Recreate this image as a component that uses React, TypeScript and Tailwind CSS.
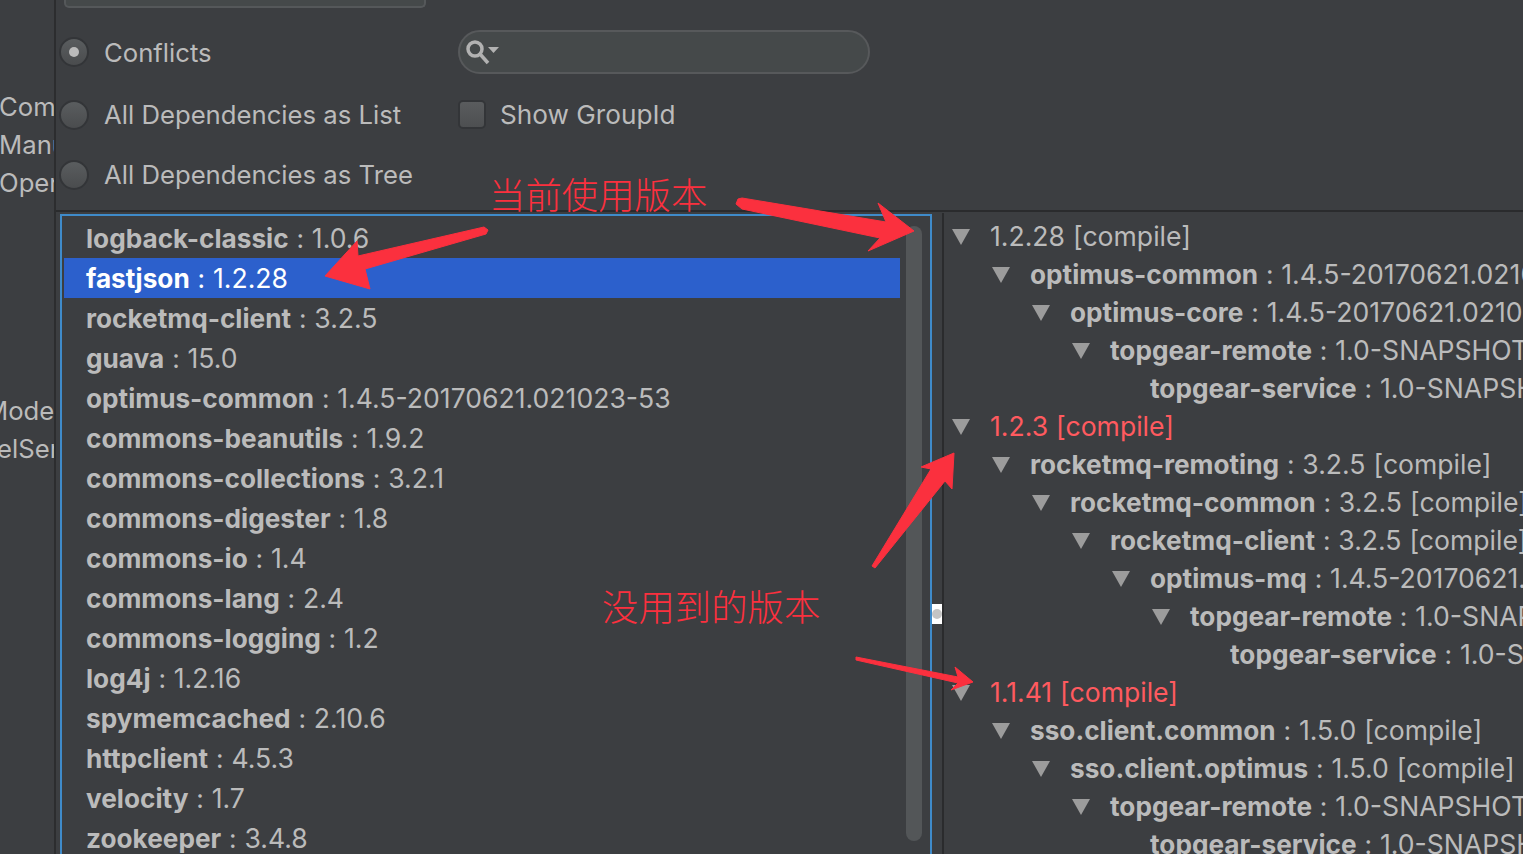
import React from 'react';

const FONT = "font-['Inter','Noto_Sans_CJK_SC',sans-serif]";

const deps: [string, string][] = [
  ['logback-classic', '1.0.6'],
  ['fastjson', '1.2.28'],
  ['rocketmq-client', '3.2.5'],
  ['guava', '15.0'],
  ['optimus-common', '1.4.5-20170621.021023-53'],
  ['commons-beanutils', '1.9.2'],
  ['commons-collections', '3.2.1'],
  ['commons-digester', '1.8'],
  ['commons-io', '1.4'],
  ['commons-lang', '2.4'],
  ['commons-logging', '1.2'],
  ['log4j', '1.2.16'],
  ['spymemcached', '2.10.6'],
  ['httpclient', '4.5.3'],
  ['velocity', '1.7'],
  ['zookeeper', '3.4.8'],
];

type TreeRow = { level: number; name?: string; ver: string; leaf?: boolean; red?: boolean };

const tree: TreeRow[] = [
  { level: 0, ver: '1.2.28 [compile]' },
  { level: 1, name: 'optimus-common', ver: '1.4.5-20170621.021023-53' },
  { level: 2, name: 'optimus-core', ver: '1.4.5-20170621.021023-53' },
  { level: 3, name: 'topgear-remote', ver: '1.0-SNAPSHOT [compile]' },
  { level: 4, name: 'topgear-service', ver: '1.0-SNAPSHOT [compile]', leaf: true },
  { level: 0, ver: '1.2.3 [compile]', red: true },
  { level: 1, name: 'rocketmq-remoting', ver: '3.2.5 [compile]' },
  { level: 2, name: 'rocketmq-common', ver: '3.2.5 [compile]' },
  { level: 3, name: 'rocketmq-client', ver: '3.2.5 [compile]' },
  { level: 4, name: 'optimus-mq', ver: '1.4.5-20170621.021023-53' },
  { level: 5, name: 'topgear-remote', ver: '1.0-SNAPSHOT [compile]' },
  { level: 6, name: 'topgear-service', ver: '1.0-SNAPSHOT [compile]', leaf: true },
  { level: 0, ver: '1.1.41 [compile]', red: true },
  { level: 1, name: 'sso.client.common', ver: '1.5.0 [compile]' },
  { level: 2, name: 'sso.client.optimus', ver: '1.5.0 [compile]' },
  { level: 3, name: 'topgear-remote', ver: '1.0-SNAPSHOT [compile]' },
  { level: 4, name: 'topgear-service', ver: '1.0-SNAPSHOT [compile]', leaf: true },
];

const Radio = ({ checked }: { checked?: boolean }) => (
  <span className="flex h-[30px] w-[30px] shrink-0 items-center justify-center rounded-full border-2 border-[#333538] bg-gradient-to-b from-[#5a5d5f] to-[#4a4c4e]">
    {checked && <span className="h-[10px] w-[10px] rounded-full bg-[#bbbbbb]" />}
  </span>
);

const Triangle = () => (
  <svg width="18" height="16" viewBox="0 0 18 16" className="shrink-0">
    <path d="M0 0H18L9 16Z" fill="#9c9c9c" />
  </svg>
);

// red hand-drawn arrow of the annotation layer
const Arrow = ({ d, className }: { d: string; className: string }) => (
  <svg className={`absolute left-0 top-0 ${className}`} width="1523" height="854" viewBox="0 0 1523 854">
    <path d={d} fill="#fb303e" stroke="#fb303e" strokeWidth="1" strokeLinejoin="round" />
  </svg>
);

export default function App() {
  return (
    <div className={`relative flex h-[854px] w-[1523px] overflow-hidden bg-[#3c3e41] text-[#bbbbbb] ${FONT}`}>
      {/* clipped left column */}
      <div className="flex h-full w-[56px] shrink-0 flex-col overflow-hidden border-r-[2px] border-[#2c2d2f] text-[25.7px] leading-[38px]">
        <div className="-ml-[1px] mt-[88px] whitespace-nowrap">Com</div>
        <div className="-ml-[1px] whitespace-nowrap">Manu</div>
        <div className="-ml-[1px] whitespace-nowrap">Oper</div>
        <div className="-ml-[15px] mt-[190px] whitespace-nowrap">Mode</div>
        <div className="-ml-[3px] whitespace-nowrap">elSer</div>
      </div>

      <div className="flex min-w-0 flex-1 flex-col">
        {/* options */}
        <div className="relative h-[212px] shrink-0 border-b-[2px] border-[#2a2b2d] text-[25.7px]">
          <div className="ml-[8px] h-[8px] w-[362px] rounded-b-[5px] border-[2px] border-t-0 border-[#55585a] bg-[#45494a]" />
          <div className="ml-[3px] mt-[21px] grid grid-cols-[399px_1fr] items-center">
            <div className="flex h-[46px] items-center gap-[15px]">
              <Radio checked />
              <span className="pt-[2px]">Conflicts</span>
            </div>
            <div className="flex h-[44px] w-[412px] items-center rounded-full border-[2px] border-[#57595b] bg-[#45494a] pl-[5px]">
              <svg width="34" height="26" viewBox="0 0 34 26" fill="none">
                <circle cx="10" cy="10" r="7" stroke="#b2b2b2" strokeWidth="3.5" />
                <path d="M15 15L23 24" stroke="#b2b2b2" strokeWidth="3.5" />
                <path d="M23 8H34L28.5 14Z" fill="#b2b2b2" />
              </svg>
            </div>
            <div className="mt-[17px] flex h-[46px] items-center gap-[15px]">
              <Radio />
              <span>All Dependencies as List</span>
            </div>
            <div className="mt-[16px] flex h-[46px] items-center gap-[14px]">
              <span className="h-[29px] w-[28px] rounded-[5px] border-[2px] border-[#333538] bg-gradient-to-b from-[#5a5c5e] to-[#4d4f51]" />
              <span className="text-[26.2px]">Show GroupId</span>
            </div>
            <div className="mt-[14px] flex h-[46px] items-center gap-[15px]">
              <Radio />
              <span>All Dependencies as Tree</span>
            </div>
          </div>
        </div>

        <div className="flex min-h-0 flex-1 items-start">
          {/* dependency list */}
          <div className="ml-[4px] mt-[2px] flex h-[660px] w-[872px] shrink-0 border-[2px] border-[#3f8bca] pl-[2px] pt-[2px]">
            <div className="w-[836px] shrink-0 text-[26.2px] leading-[40px] [word-spacing:0.5px]">
              {deps.map(([name, ver]) => (
                <div
                  key={name}
                  className={`h-[40px] whitespace-nowrap pl-[22px] ${name === 'fastjson' ? 'bg-[#2c60cc] text-white' : ''}`}
                >
                  <span className="font-bold">{name}</span> : <span className="text-[26.6px]">{ver}</span>
                </div>
              ))}
            </div>
            <div className="ml-[6px] mt-[8px] h-[615px] w-[16px] shrink-0 rounded-full bg-[#535658]" />
          </div>

          {/* tree */}
          <div className="relative ml-[10px] mt-[1px] h-[660px] min-w-0 flex-1 overflow-hidden border-l-[2px] border-[#2a2b2d] pt-[5px] text-[26.2px] leading-[38px] [word-spacing:0.5px]">
            {tree.map((r, i) => (
              <div key={i} className="flex h-[38px] items-center whitespace-nowrap pl-[8px]">
                <div className="flex shrink-0 items-center" style={{ marginLeft: r.level * 40 }}>
                  {r.leaf ? <span className="w-[18px]" /> : <Triangle />}
                </div>
                <div className={`ml-[20px] pb-[2px] ${r.red ? 'text-[#ff5a5f]' : ''}`}>
                  {r.name && <span className="font-bold">{r.name}</span>}
                  {r.name ? ' : ' : ''}
                  <span className="text-[26.6px]">{r.ver}</span>
                </div>
              </div>
            ))}
          </div>
        </div>
      </div>

      {/* splitter handle */}
      <div className="absolute left-[932px] top-[604px] flex h-[20px] w-[10px] items-center justify-center bg-white">
        <span className="h-[10px] w-[10px] rounded-full bg-[#c4c4c4]" />
      </div>

      {/* annotations */}
      <div className="pointer-events-none absolute left-[489px] top-[169px] whitespace-nowrap text-[36.4px] leading-[48px] text-[#fb303e] font-['Noto_Sans_CJK_SC',sans-serif] font-light">
        当前使用版本
      </div>
      <div className="pointer-events-none absolute left-[602px] top-[581px] whitespace-nowrap text-[36.4px] leading-[48px] text-[#fb303e] font-['Noto_Sans_CJK_SC',sans-serif] font-light">
        没用到的版本
      </div>
      <Arrow className="pointer-events-none" d="M488 230L486 234L365 269L370 289L325 276L357 241L358 256L484 227Z" />
      <Arrow className="pointer-events-none" d="M738 199L736 204L742 209L880 238L868 251L914 231L878 203L886 222L742 198Z" />
      <Arrow className="pointer-events-none" d="M872 566L875 568L945 481L952 489L954 453L921 467L931 469Z" />
      <Arrow className="pointer-events-none" d="M856 657L856 660L958 683L951 690L973 682L955 667L958 677Z" />
    </div>
  );
}
